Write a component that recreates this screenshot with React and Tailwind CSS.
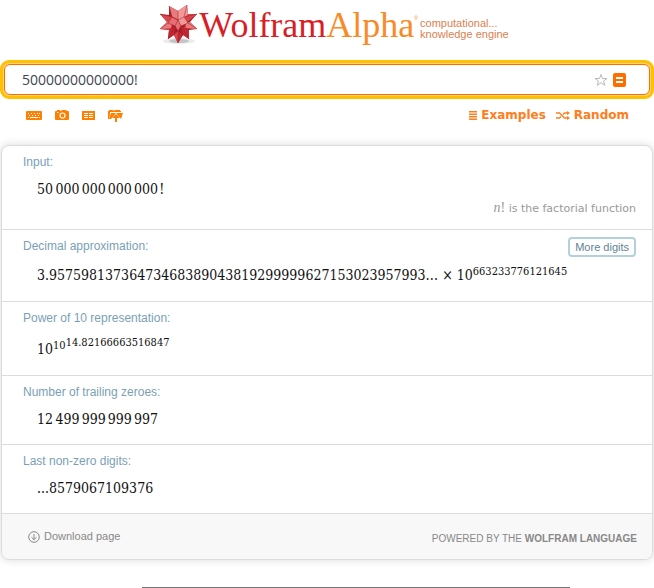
import React from "react";

const serif = "font-['Liberation_Serif',serif]";
const numeral = "font-['DejaVu_Serif_Condensed','DejaVu_Serif',serif] text-sm leading-5 text-[#111]";
const exponent = "text-[11px] leading-none";

function Spikey() {
  return (
    <svg viewBox="0 0 40 46" className="h-[46px] w-10 shrink-0" aria-hidden="true">
      <ellipse cx="20" cy="41" rx="16" ry="3" fill="#ececec" />
      <ellipse cx="20" cy="41" rx="10" ry="2" fill="#c4c4c4" />
      <path d="M28 5L19 11 10 6 10 15 1 14 8 22 1 29 10 30 9 39 15 35 19 43 24 35 30 39 30 30 38 29 31 22 38 14 29 14z" fill="#a81c26" />
      <path d="M28 5L19 11 19 20 25 17zM38 14L29 14 25 17 27 23zM38 29L31 23 27 23 25 28zM1 14L8 22 13 23 14 17zM1 29L10 30 13 27 12 22z" fill="#d9474e" />
      <path d="M10 6L19 11 19 20 13 17zM31 22L38 29 27 28 27 23zM1 29L8 22 13 23 12 28z" fill="#ea7a7c" />
      <path d="M28 5L29 14 25 18 19 20 19 11zM19 20L25 17 29 23 22 26z" fill="#f29a98" />
      <path d="M19 20L13 17 9 23 16 26zM19 20L22 26 19 31 16 26z" fill="#e67074" />
      <path d="M19 31L24 35 19 43 15 35zM16 26L10 30 9 39 15 35zM22 26L30 30 30 39 24 35z" fill="#c12a34" />
      <path d="M19 31L15 35 19 43z" fill="#d9474e" />
      <path d="M19 11V20L13 17 10 6M28 5L25 17 38 14M19 20L25 17 29 23 22 26zL13 17 9 23 16 26zM13 17L1 14M9 23L1 29M29 23L38 29M16 26L19 31 22 26 30 39M16 26L9 39M19 31V43" fill="none" stroke="#9a1822" strokeOpacity="0.700" strokeWidth="0.700" />
    </svg>
  );
}

function Header() {
  return (
    <header className="flex justify-center pl-[14px]">
      <a href="#" className="flex" aria-label="WolframAlpha computational knowledge engine">
        <Spikey />
        <span className={`${serif} pt-1 text-4xl leading-[42px] text-[#d81e26]`}>
          Wolfram<span className="text-[#f98a26]">Alpha</span>
        </span>
        <span className="pt-4 text-[5px] leading-none text-[#f98a26]">®</span>
        <span className="pl-[2px] pt-[18px] font-['Liberation_Sans',sans-serif] text-[11px] leading-[11px] text-[#dc8050]">
          <span className="block">computational...</span>
          <span className="block">knowledge engine</span>
        </span>
      </a>
    </header>
  );
}

function Search() {
  return (
    <form className="mt-[14px] rounded-[9px] border-[3px] border-[#ffc000] bg-[#ffd277] p-px" onSubmit={(e) => e.preventDefault()}>
      <div className="flex h-[31px] items-center rounded-md border border-[#ff6d00] bg-white pl-[17px] pr-[23px]">
        <input
          aria-label="Enter what you want to calculate"
          defaultValue="50000000000000!"
          className="min-w-0 flex-1 font-['Open_Sans',sans-serif] text-sm text-[#3d4450] outline-none"
        />
        <button type="button" aria-label="Add to favorites" className="mr-[5px]">
          <svg viewBox="0 0 14 14" className="size-[14px]" fill="none" stroke="#b9b9b9">
            <path d="M7 1.500l1.500 4H13L9.500 8l1.300 4.300L7 9.800l-3.800 2.500L4.500 8 1 5.500h4.500z" />
          </svg>
        </button>
        <button type="submit" aria-label="Compute">
          <svg viewBox="0 0 13 14" className="h-[14px] w-[13px]">
            <rect width="13" height="14" rx="2" fill="#ff6d00" />
            <path d="M3 4h7v2H3zM3 8h7v2H3z" fill="#fff" />
          </svg>
        </button>
      </div>
    </form>
  );
}

function Tools() {
  return (
    <nav className="mt-[6px] flex h-5 items-center justify-between pl-[26px] pr-[25px] text-[#ff8000]">
      <div className="flex items-center gap-[13px]">
        <button aria-label="Extended keyboard">
          <svg viewBox="0 0 16 9" className="h-[9px] w-4">
            <rect width="16" height="9" rx="1" fill="currentColor" />
            <path d="M2 2h1v1H2zM5 2h1v1H5zM8 2h1v1H8zM11 2h1v1h-1zM13 2h1v1h-1zM3 4h1v1H3zM6 4h1v1H6zM9 4h1v1H9zM12 4h1v1h-1zM2 6h1v1H2zM4 6h8v1H4zM13 6h1v1h-1z" fill="#fff" />
          </svg>
        </button>
        <button aria-label="Image input">
          <svg viewBox="0 0 14 10" className="h-[10px] w-[14px]">
            <path d="M1 1h1V0h3v1h1L7 0h4l1 1h1q1 0 1 1v7q0 1-1 1H1q-1 0-1-1V2q0-1 1-1z" fill="currentColor" />
            <circle cx="7.500" cy="5.500" r="2.500" fill="none" stroke="#fff" strokeWidth="1.200" />
            <path d="M2 2h1.500v1H2z" fill="#fff" />
          </svg>
        </button>
        <button aria-label="Data input">
          <svg viewBox="0 0 13 9" className="h-[9px] w-[13px]">
            <path d="M0 0h13v9H0z" fill="currentColor" />
            <path d="M2 2h4v1H2zM7 2h4v1H7zM2 4h4v1H2zM7 4h4v1H7zM2 6h4v1H2zM7 6h4v1H7z" fill="#fff" />
          </svg>
        </button>
        <button aria-label="File upload">
          <svg viewBox="0 0 15 13" className="h-[13px] w-[15px]">
            <path d="M0 10V2h1V1h4l1 1 1-1h5v1h1v1H2v2L1 10z" fill="currentColor" />
            <path d="M3 4h12l-2 6H1z" fill="currentColor" />
            <path d="M8 4l5 6h-3v3H6v-3H3z" fill="#fff" />
            <path d="M8 5l4 4H9v4H7V9H4z" fill="currentColor" />
          </svg>
        </button>
      </div>
      <div className="flex items-center gap-[10px] font-['DejaVu_Sans',sans-serif] text-xs font-bold text-[#ff7d1a]">
        <a href="#" className="flex items-center gap-1">
          <svg viewBox="0 0 8 9" className="h-[9px] w-2" fill="currentColor">
            <path d="M0 0h8v1.500H0zM0 2.500h8V4H0zM0 5h8v1.500H0zM0 7.500h8V9H0z" />
          </svg>
          Examples
        </a>
        <a href="#" className="flex items-center gap-1">
          <svg viewBox="0 0 14 9" className="h-[9px] w-[14px]" fill="none" stroke="currentColor" strokeWidth="1.300">
            <path d="M0 2h3.500l5 5H12M0 7h3.500L5 5.500M7 3.500L8.500 2H12" />
            <path d="M11 0l3 2-3 2zM11 5l3 2-3 2z" fill="currentColor" stroke="none" />
          </svg>
          Random
        </a>
      </div>
    </nav>
  );
}

function Pod({ title, action, className = "", children }) {
  return (
    <section className={`border-b border-[#dcdcdc] pl-[21px] pr-4 pt-2 ${className}`}>
      <div className="flex h-4 items-start justify-between">
        <h2 className="text-xs leading-4 text-[#7a9fb6]">{title}</h2>
        {action}
      </div>
      <div className="pl-[14px]">{children}</div>
    </section>
  );
}

export default function App() {
  return (
    <div className="flex min-h-screen flex-col overflow-hidden bg-white font-['Liberation_Sans',sans-serif]">
      <Header />
      <Search />
      <Tools />
      <main className="mx-px mt-5 overflow-hidden rounded-lg border border-[#dcdcdc] bg-white shadow-[0_0_8px_rgba(0,0,0,0.15)]">
        <Pod title="Input:" className="pb-3">
          <p className={`${numeral} mt-[9px]`}>50&#8201;000&#8198;000&#8198;000&#8198;000&#8202;!</p>
          <p className="mt-px text-right font-['DejaVu_Sans',sans-serif] text-[11px] leading-4 text-[#999]">
            <span className={`${serif} text-sm leading-4`}><i>n</i>!</span> is the factorial function
          </p>
        </Pod>
        <Pod
          title="Decimal approximation:"
          className="pb-4"
          action={
            <button className="-mt-px h-5 shrink-0 rounded border-2 border-[#b3d0dc] px-[5px] text-[11px] leading-4 text-[#5f8295]">
              More digits
            </button>
          }
        >
          <p className={`${numeral} mt-[11px] whitespace-nowrap`}>
            3.95759813736473468389043819299999627153023957993… × 10
            <sup className={exponent}>663233776121645</sup>
          </p>
        </Pod>
        <Pod title="Power of 10 representation:" className="pb-4">
          <p className={`${numeral} mt-[13px]`}>
            10
            <sup className={exponent}>
              10<sup className={`${exponent} top-0 align-[3px]`}>14.82166663516847</sup>
            </sup>
          </p>
        </Pod>
        <Pod title="Number of trailing zeroes:" className="pb-[15px]">
          <p className={`${numeral} mt-[9px]`}>12&#8201;499&#8198;999&#8198;999&#8198;997</p>
        </Pod>
        <Pod title="Last non-zero digits:" className="pb-[15px]">
          <p className={`${numeral} mt-[9px]`}>...8579067109376</p>
        </Pod>
        <footer className="flex h-[45px] items-center justify-between bg-[#f8f8f8] pl-[26px] pr-[15px] text-[11px] text-[#888]">
          <a href="#" className="flex items-center gap-1">
            <svg viewBox="0 0 12 12" className="size-3" fill="none" stroke="currentColor">
              <circle cx="6" cy="6" r="5.300" />
              <path d="M6 3v5.500M3.500 6.300L6 8.700l2.500-2.400" />
            </svg>
            Download page
          </a>
          <p className="pt-1 text-[10px]">
            POWERED BY THE <b>WOLFRAM LANGUAGE</b>
          </p>
        </footer>
      </main>
      <hr className="ml-[142px] mr-[84px] mt-[27px] border-[#77777a]" />
    </div>
  );
}
